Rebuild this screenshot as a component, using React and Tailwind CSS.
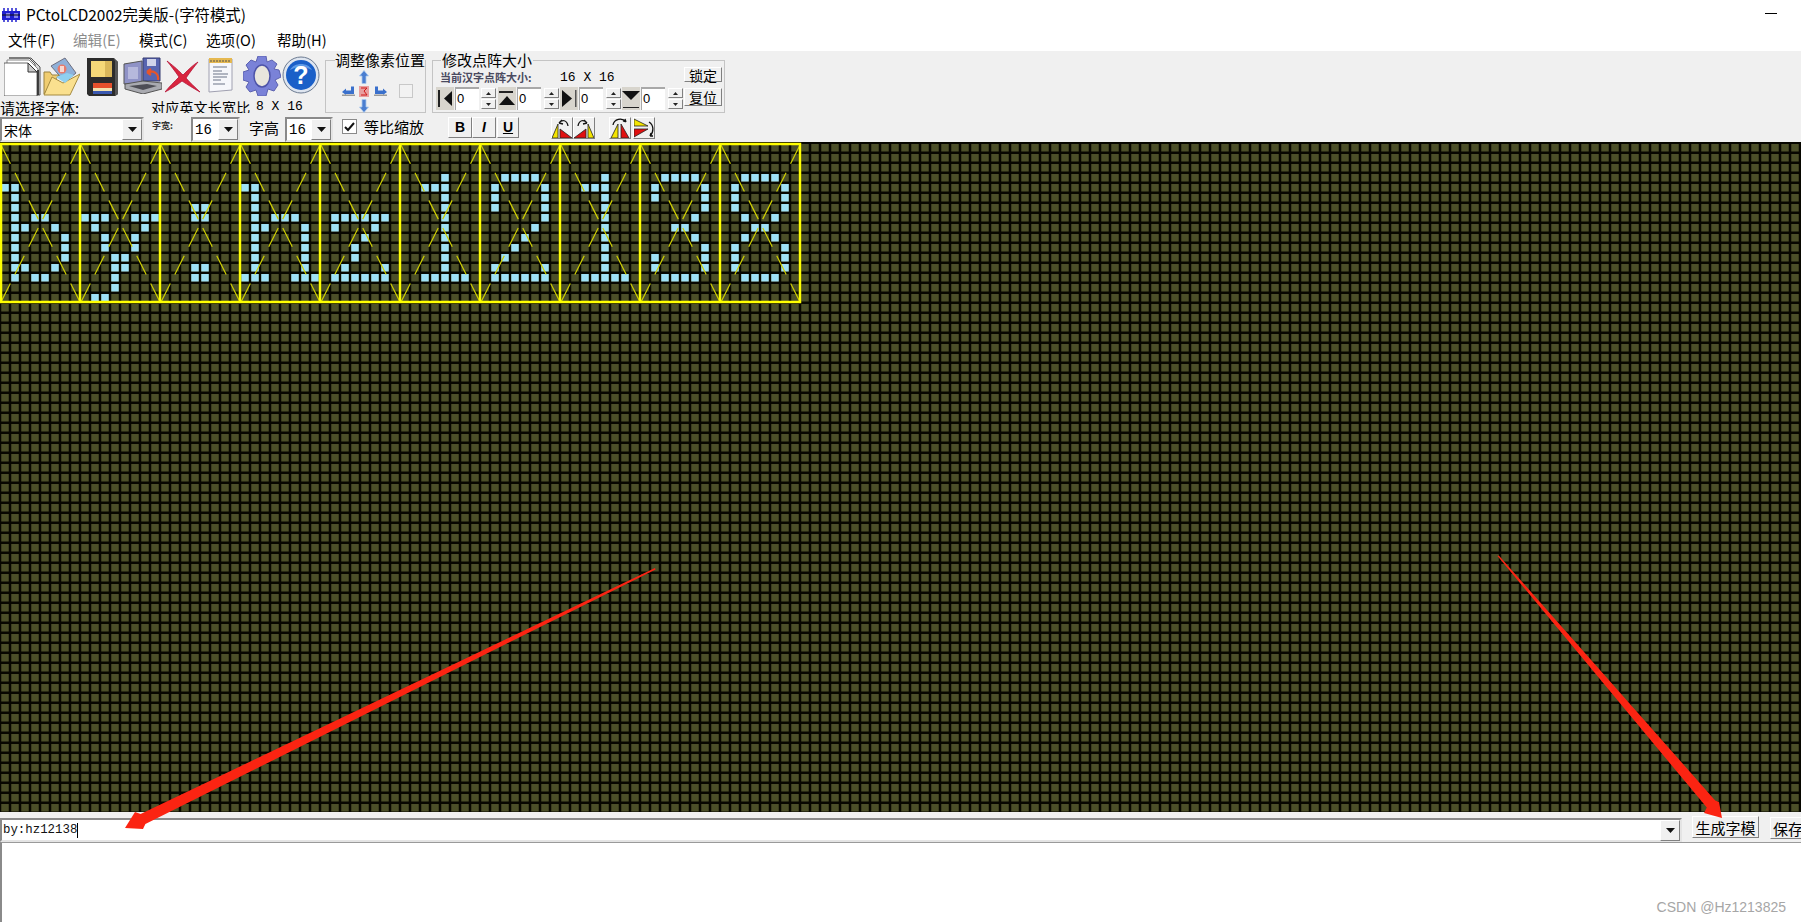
import React from 'react'

const glyphs = {
  b: { 4: '01', 5: '1', 6: '1', 7: '134', 8: '125', 9: '16', 10: '16', 11: '16', 12: '125', 13: '134' },
  y: { 7: '012567', 8: '16', 9: '25', 10: '25', 11: '34', 12: '34', 13: '3', 14: '3', 15: '12' },
  colon: { 6: '34', 7: '34', 12: '34', 13: '34' },
  h: { 4: '01', 5: '1', 6: '1', 7: '1345', 8: '126', 9: '16', 10: '16', 11: '16', 12: '16', 13: '012567' },
  z: { 7: '123456', 8: '15', 9: '4', 10: '3', 11: '3', 12: '26', 13: '123456' },
  one: { 3: '4', 4: '234', 5: '4', 6: '4', 7: '4', 8: '4', 9: '4', 10: '4', 11: '4', 12: '4', 13: '23456' },
  two: { 3: '2345', 4: '16', 5: '16', 6: '16', 7: '6', 8: '5', 9: '4', 10: '3', 11: '2', 12: '16', 13: '123456' },
  three: { 3: '2345', 4: '16', 5: '16', 6: '6', 7: '5', 8: '34', 9: '5', 10: '6', 11: '16', 12: '16', 13: '2345' },
  eight: { 3: '2345', 4: '16', 5: '16', 6: '16', 7: '25', 8: '34', 9: '25', 10: '16', 11: '16', 12: '16', 13: '2345' },
}

const word = ['b', 'y', 'colon', 'h', 'z', 'one', 'two', 'one', 'three', 'eight']

const raised = 'border border-t-white border-l-white border-r-[#808080] border-b-[#808080] bg-[#f0f0f0]'
const sunken = 'border-2 border-t-[#8a8a8a] border-l-[#8a8a8a] border-r-[#e4e4e4] border-b-[#e4e4e4] bg-white'

const MatrixCanvas = () => {
  const cells = []
  word.forEach((name, c) => {
    Object.entries(glyphs[name]).forEach(([row, cols]) => {
      cols.split('').forEach((col) => {
        cells.push(
          <rect key={`${c}-${row}-${col}`} x={c * 80 + Number(col) * 10 + 1.25} y={Number(row) * 10 + 2} width="7.5" height="7.5" fill="#9fe1f6" />
        )
      })
    })
  })

  return (
    <svg width="1801" height="670" className="block shrink-0">
      <defs>
        <pattern id="dot" width="10" height="10" patternUnits="userSpaceOnUse">
          <rect width="10" height="10" fill="#070700" />
          <rect x="1.25" y="2" width="7.5" height="7.5" fill="#4b4f28" />
        </pattern>
      </defs>
      <rect width="1801" height="670" fill="url(#dot)" />
      {cells}
      {word.map((_, c) => (
        <g key={c} stroke="#cfcf00" strokeWidth="1.2" strokeDasharray="21 10">
          <line x1={c * 80 + 1} y1="3" x2={c * 80 + 80} y2="160" />
          <line x1={c * 80 + 80} y1="3" x2={c * 80 + 1} y2="160" />
        </g>
      ))}
      <g stroke="#ffff00" strokeWidth="2.5" fill="none">
        <rect x="1" y="2" width="799" height="158" strokeWidth="2.5" />
        {word.slice(1).map((_, c) => (
          <line key={c} x1={(c + 1) * 80} y1="2" x2={(c + 1) * 80} y2="160" />
        ))}
      </g>
    </svg>
  )
}

const NewIcon = () => (
  <svg width="37" height="40" viewBox="0 0 37 40" className="shrink-0">
    <path d="M5 2H27L36 11V39H31V8L25 2Z" fill="#d8d8d8" stroke="#555" strokeWidth="1" />
    <path d="M3 4H25L34 13V39H3Z" fill="#ffffff" stroke="#8a8a8a" strokeWidth="1" />
    <path d="M0 7H24L33 16V40H0Z" fill="#ffffff" stroke="#444" strokeWidth="0.8" />
    <path d="M24 7V16H33Z" fill="#c9c9c9" stroke="#333" strokeWidth="1" />
    <path d="M34 14V39" stroke="#222" strokeWidth="1.6" />
  </svg>
)

const OpenIcon = () => (
  <svg width="37" height="40" viewBox="0 0 37 40" className="shrink-0">
    <path d="M8 10L22 2L33 17L22 26Z" fill="#8fb0d8" stroke="#6f6f80" strokeWidth="1" />
    <circle cx="19" cy="13" r="4.5" fill="#e87a6a" />
    <path d="M17 10h4v6h-4z" fill="#f7d8d0" />
    <path d="M1 16H7L9 19H16L1 38Z" fill="#f0cd70" stroke="#9a8240" strokeWidth="1" />
    <path d="M1 39L9 21L20 27L37 18L27 39Z" fill="#fae08f" stroke="#a48a40" strokeWidth="1" />
    <path d="M13 21L22 27L31 19L24 17Z" fill="#8fd0f0" />
  </svg>
)

const SaveIcon = () => (
  <svg width="31" height="39" viewBox="0 0 31 39" className="shrink-0">
    <path d="M0 1H27L31 5V37L28 39H2L0 37Z" fill="#2c2c2c" />
    <path d="M26 1L31 5V37L28 39V4Z" fill="#555" />
    <rect x="4" y="4" width="21" height="16" fill="#f5d878" />
    <rect x="18" y="4" width="7" height="16" fill="#d9b75a" />
    <rect x="6" y="26" width="19" height="11" fill="#e4502c" />
    <rect x="6" y="31" width="19" height="3" fill="#f1e2b0" />
    <rect x="6" y="34" width="19" height="3" fill="#3a58b0" />
  </svg>
)

const SaveAsIcon = () => (
  <svg width="39" height="37" viewBox="0 0 39 37" className="shrink-0">
    <path d="M1 7L19 4V26L1 27Z" fill="#8f92c6" stroke="#555" strokeWidth="1" />
    <path d="M5 10H15V22H5Z" fill="#b6b8dc" />
    <path d="M20 1H37V24H20Z" fill="#5865b0" stroke="#353a70" strokeWidth="1" />
    <rect x="24" y="2" width="9" height="7" fill="#d0d4ea" />
    <path d="M2 27L20 24L39 26V32L20 37L2 32Z" fill="#a9aab0" stroke="#555" strokeWidth="1" />
    <path d="M6 29L24 27L34 29L20 33Z" fill="#4d4d55" />
    <path d="M28 15H24M24 15L28 12M24 15L28 18M24 15C30 13 36 16 35 23" stroke="#e8552a" strokeWidth="2.2" fill="none" />
  </svg>
)

const DeleteIcon = () => (
  <svg width="35" height="33" viewBox="0 0 35 33" className="shrink-0">
    <path d="M2 1C10 7 14 11 18 15C24 9 28 5 33 2C29 7 25 12 21 18C25 23 30 27 35 32C28 28 23 25 17 21C12 25 6 29 0 32C4 27 9 22 14 17C10 11 6 6 2 1Z" fill="#d9263f" stroke="#b6173a" strokeWidth="0.8" />
  </svg>
)

const NotesIcon = () => (
  <svg width="25" height="36" viewBox="0 0 25 36" className="shrink-0">
    <path d="M1 2H24V33L1 35Z" fill="#f6f7fb" stroke="#a0a0b0" strokeWidth="1" />
    <rect x="1" y="1" width="23" height="5" fill="#e5b850" />
    <path d="M3 3v2M6 3v2M9 3v2M12 3v2M15 3v2M18 3v2M21 3v2" stroke="#555" strokeWidth="1" />
    <path d="M5 10H19M5 14H14M5 17H20M5 20H19M5 23H13M5 27H17" stroke="#6a7488" strokeWidth="1.2" />
  </svg>
)

const GearIcon = () => (
  <svg width="38" height="40" viewBox="0 0 38 40" className="shrink-0">
    <path
      d="M15 0H23L24 6L29 4L34 8L31 13L36 14L38 21L32 24L35 29L31 35L25 33L23 40H15L13 34L7 36L3 31L6 26L0 24V16L6 14L3 9L8 4L13 6Z"
      fill="#7a82d8"
      stroke="#5c62b0"
      strokeWidth="1"
    />
    <ellipse cx="19" cy="20" rx="8" ry="11" fill="#e9e6dd" stroke="#4e54a8" strokeWidth="1.5" />
  </svg>
)

const HelpIcon = () => (
  <svg width="38" height="38" viewBox="0 0 38 38" className="shrink-0">
    <circle cx="19" cy="19" r="18" fill="#dfe6f0" stroke="#6b7a90" strokeWidth="1" />
    <circle cx="19" cy="19" r="15" fill="#1a5fc8" />
    <path d="M8 14C12 6 26 6 30 14C22 10 15 10 8 14Z" fill="#5e9ae6" />
    <text x="19" y="28" textAnchor="middle" fontSize="25" fontWeight="700" fill="#fff" fontFamily="Liberation Sans">?</text>
  </svg>
)

const UpDownArrow = ({ flip }) => (
  <svg width="10" height="14" viewBox="0 0 10 14" className={flip ? 'rotate-180' : ''}>
    <path d="M5 0.5L9.5 6H7V13.5H3V6H0.5Z" fill="#4a7ed0" stroke="#a8c8ee" strokeWidth="0.8" />
  </svg>
)

const SideArrow = ({ flip }) => (
  <svg width="13" height="10" viewBox="0 0 13 10" className={flip ? '-scale-x-100' : ''}>
    <path d="M0 6L4 2.5V4.5H9V0.5H12V8H4V9Z" fill="#3a70cc" />
    <rect x="0" y="8.5" width="13" height="1.5" fill="#9a9a9a" />
  </svg>
)

const SmallTri = ({ down }) => (
  <svg width="5" height="3" viewBox="0 0 5 3" className={down ? 'rotate-180' : ''}>
    <path d="M2.5 0L5 3H0Z" fill="#222" />
  </svg>
)

const Spin = () => (
  <div className="flex flex-col gap-[1px] w-[15px] shrink-0">
    <div className={`${raised} h-[10px] flex items-center justify-center`}>
      <SmallTri />
    </div>
    <div className={`${raised} h-[10px] flex items-center justify-center`}>
      <SmallTri down />
    </div>
  </div>
)

const EdgeIcon = ({ dir }) => {
  const shapes = {
    left: (
      <>
        <path d="M2 3H4V20H2Z" fill="#222" />
        <path d="M8 11.5L16 4V19Z" fill="#111" />
      </>
    ),
    up: (
      <>
        <path d="M1 18L9 9L17 18Z" fill="#111" />
        <path d="M1 4H15V6H1Z" fill="#222" />
      </>
    ),
    right: (
      <>
        <path d="M15 3H16.5V20H15Z" fill="#555" />
        <path d="M2 3L12 11.5L2 20Z" fill="#111" />
      </>
    ),
    down: (
      <>
        <path d="M0 4L18 4L9 13Z" fill="#111" />
        <path d="M1 20H17V21H1Z" fill="#222" />
      </>
    ),
  }
  return (
    <svg width="18" height="23" viewBox="0 0 18 23" className="shrink-0 bg-[#d8d5cd]">
      {shapes[dir]}
    </svg>
  )
}

const SpinGroup = ({ dir, iconGap, after }) => (
  <div className="flex items-center" style={{ marginRight: after }}>
    <EdgeIcon dir={dir} />
    <div className="ml-[1px] w-[24px] h-[23px] bg-white border-t-2 border-l border-[#a8a8a8] font-['Liberation_Sans',sans-serif] text-[13px] leading-[20px] pl-[1px]">
      0
    </div>
    <div style={{ marginLeft: iconGap }}>
      <Spin />
    </div>
  </div>
)

const DropButton = () => (
  <div className={`${raised} w-[20px] h-[21px] flex items-center justify-center shrink-0`}>
    <svg width="9" height="5" viewBox="0 0 9 5">
      <path d="M0 0H9L4.5 5Z" fill="#111" />
    </svg>
  </div>
)

const Combo = ({ value, className, mono }) => (
  <div className={`${sunken} ${className} h-[25px] flex items-center justify-between shrink-0`}>
    <span className={`pl-[2px] text-[14px] leading-none ${mono ? "font-['Liberation_Mono',monospace] text-[13px]" : ''}`}>{value}</span>
    <DropButton />
  </div>
)

const FlipIcon = ({ kind }) => {
  const bodies = {
    ccw: (
      <>
        <path d="M0 20L6 6V20Z" fill="#f4e400" stroke="#222" strokeWidth="0.8" />
        <path d="M8 11L20 20H8Z" fill="#e01010" stroke="#222" strokeWidth="0.8" />
        <path d="M7 5C10 1 15 2 16 8M7 5L10 2M7 5L11 6" stroke="#111" strokeWidth="1.3" fill="none" />
      </>
    ),
    cw: (
      <>
        <path d="M0 20L12 11V20Z" fill="#e01010" stroke="#222" strokeWidth="0.8" />
        <path d="M14 6L20 20H14Z" fill="#f4e400" stroke="#222" strokeWidth="0.8" />
        <path d="M13 5C10 1 5 2 4 8M13 5L10 2M13 5L9 6" stroke="#111" strokeWidth="1.3" fill="none" />
      </>
    ),
    vert: (
      <>
        <path d="M1 20L8 6V20Z" fill="#f4e400" stroke="#222" strokeWidth="0.8" />
        <path d="M11 6L19 20H11Z" fill="#e01010" stroke="#222" strokeWidth="0.8" />
        <path d="M3 7C4 1 12 -1 16 4M16 4L13 3M16 4L15 1" stroke="#111" strokeWidth="1.3" fill="none" />
      </>
    ),
    horiz: (
      <>
        <path d="M0 1L14 8H0Z" fill="#f4e400" stroke="#222" strokeWidth="0.8" />
        <path d="M0 11H14L0 19Z" fill="#e01010" stroke="#222" strokeWidth="0.8" />
        <path d="M15 4C20 7 20 14 16 18M16 18L19 18M16 18L17 15" stroke="#111" strokeWidth="1.3" fill="none" />
      </>
    ),
  }
  return (
    <div className={`${raised} w-[22px] h-[22px] shrink-0`}>
      <svg width="20" height="20" viewBox="0 0 20 20" className="block">
        {bodies[kind]}
      </svg>
    </div>
  )
}

const ToolButton = ({ children, className }) => (
  <div className={`${raised} ${className} flex items-center justify-center shrink-0`}>{children}</div>
)

const PositionGroup = () => (
  <fieldset className="w-[101px] h-[61px] ml-0 border border-[#c4c4c4] shrink-0 min-w-0">
    <legend className="ml-[9px] text-[15px] leading-[16px] whitespace-nowrap">调整像素位置</legend>
    <div className="flex items-center">
      <div className="ml-[14px] mt-[1px] grid grid-cols-[16px_16px_16px] grid-rows-[15px_14px_15px] place-items-center">
        <span />
        <UpDownArrow />
        <span />
        <SideArrow />
        <svg width="10" height="11" viewBox="0 0 10 11">
          <rect width="10" height="11" fill="#e8a0a0" />
          <path d="M2 2H8L5 5L8 9H2" stroke="#d01818" fill="none" />
        </svg>
        <SideArrow flip />
        <span />
        <UpDownArrow flip />
        <span />
      </div>
      <div className="ml-[11px] w-[14px] h-[14px] border border-[#c8c8c8] bg-[#f2f2f2]" />
    </div>
  </fieldset>
)

const SizeGroup = () => (
  <fieldset className="ml-[6px] w-[293px] h-[61px] border border-[#c4c4c4] shrink-0 min-w-0">
    <legend className="ml-[8px] px-[1px] text-[15px] leading-[16px] whitespace-nowrap">修改点阵大小</legend>
    <div className="flex flex-col">
      <div className="flex items-start h-[20px]">
        <span className="ml-[7px] mt-[2px] w-[120px] text-[11px] leading-[14px] text-[#4a4a60] font-bold whitespace-nowrap">当前汉字点阵大小:</span>
        <span className="mt-[3px] font-['Liberation_Mono',monospace] text-[13px] leading-[14px] whitespace-pre">16 X 16</span>
        <ToolButton className="ml-auto mr-[2px] w-[38px] h-[15px] text-[14px] leading-none -mt-[1px]">锁定</ToolButton>
      </div>
      <div className="flex items-center -mt-[1px] pl-[3px]">
        <SpinGroup dir="left" iconGap="2px" after="2px" />
        <SpinGroup dir="up" iconGap="3px" after="1px" />
        <SpinGroup dir="right" iconGap="3px" after="1px" />
        <SpinGroup dir="down" iconGap="3px" after="0px" />
        <ToolButton className="ml-[1px] w-[38px] h-[18px] text-[14px] leading-none -mt-[3px]">复位</ToolButton>
      </div>
    </div>
  </fieldset>
)

const Toolbar = () => (
  <div className="h-[91px] bg-[#f0f0f0] flex flex-col shrink-0">
    <div className="flex h-[64px] pt-[1px]">
      <div className="w-[325px] shrink-0 flex flex-col">
        <div className="h-[47px] flex items-start pt-[4px]">
          <div className="ml-[4px]"><NewIcon /></div>
          <div className="ml-[2px]"><OpenIcon /></div>
          <div className="ml-[7px] mt-[1px]"><SaveIcon /></div>
          <div className="ml-[5px] mt-[1px]"><SaveAsIcon /></div>
          <div className="ml-[3px] mt-[4px]"><DeleteIcon /></div>
          <div className="ml-[8px] mt-[1px]"><NotesIcon /></div>
          <div className="ml-[10px]"><GearIcon /></div>
          <div className="ml-[1px]"><HelpIcon /></div>
        </div>
        <div className="h-[14px] flex items-start whitespace-nowrap">
          <span className="w-[151px] text-[15px] leading-[17px]">请选择字体:</span>
          <span className="w-[105px] h-[14px] overflow-hidden text-[14px] leading-[16px] tracking-[0.2px]">对应英文长宽比</span>
          <span className="font-['Liberation_Mono',monospace] text-[13px] leading-[16px] whitespace-pre">8 X 16</span>
        </div>
      </div>
      <PositionGroup />
      <SizeGroup />
    </div>
    <div className="flex items-start h-[27px] pt-[2px]">
      <Combo value="宋体" className="w-[144px]" />
      <span className="ml-[8px] w-[39px] mt-[3px] text-[9px] leading-[12px] font-bold text-[#333]">字宽:</span>
      <Combo value="16" mono className="w-[49px]" />
      <span className="ml-[9px] w-[36px] text-[15px] leading-[22px]">字高</span>
      <Combo value="16" mono className="w-[48px]" />
      <div className="ml-[9px] mt-[2px] w-[15px] h-[15px] bg-white border border-[#8a8a8a] flex items-center justify-center shrink-0">
        <svg width="11" height="10" viewBox="0 0 11 10">
          <path d="M1 5L4 8L10 1" stroke="#111" strokeWidth="2" fill="none" />
        </svg>
      </div>
      <span className="ml-[7px] w-[84px] text-[15px] leading-[20px] whitespace-nowrap">等比缩放</span>
      <ToolButton className="w-[24px] h-[21px] font-['Liberation_Sans',sans-serif] font-bold text-[14px]">B</ToolButton>
      <ToolButton className="w-[24px] h-[21px] font-['Liberation_Sans',sans-serif] font-bold italic text-[14px]">I</ToolButton>
      <ToolButton className="ml-[1px] w-[22px] h-[21px] font-['Liberation_Sans',sans-serif] font-bold underline text-[14px]">U</ToolButton>
      <div className="ml-[32px] flex"><FlipIcon kind="ccw" /><FlipIcon kind="cw" /></div>
      <div className="ml-[14px] flex gap-[2px]"><FlipIcon kind="vert" /><FlipIcon kind="horiz" /></div>
    </div>
  </div>
)

const BottomBar = () => (
  <div className="h-[30px] bg-[#f0f0f0] flex items-start shrink-0 overflow-hidden">
    <div className={`${sunken} mt-[6px] w-[1682px] h-[24px] flex items-center justify-between shrink-0`}>
      <span className="pl-[1px] font-['Liberation_Mono',monospace] text-[12.4px] leading-none text-[#111] border-r border-black h-[15px] flex items-center">by:hz12138</span>
      <DropButton />
    </div>
    <ToolButton className="ml-[10px] mt-[4px] w-[67px] h-[22px] text-[15px] leading-none">生成字模</ToolButton>
    <ToolButton className="ml-[11px] mt-[5px] w-[60px] h-[22px] text-[15px] leading-none justify-start pl-[2px]">保存</ToolButton>
  </div>
)

const AnnotationArrows = () => (
  <svg width="1801" height="922" className="absolute inset-0 pointer-events-none">
    <path d="M655 568L655.6 569.4L145.4 824L143 829L125 828L135 812L140.6 814Z" fill="#fb2412" />
    <path d="M1497.5 556L1498.8 555.6L1715.2 800.4L1719 802L1722 818L1704 813L1706.8 807.6Z" fill="#fb2412" />
  </svg>
)

export default function App() {
  return (
    <div className="relative w-full h-[922px] overflow-hidden bg-white flex flex-col text-black font-['Noto_Sans_CJK_SC',sans-serif]">
      <div className="h-[30px] flex items-center shrink-0">
        <svg width="20" height="16" viewBox="0 0 20 16" className="ml-[1px] shrink-0">
          <rect width="20" height="16" fill="#fff" />
          <path d="M1 4H19V13H1Z" fill="#2020d0" />
          <path d="M3 1V15M7 1V15M11 1V15M15 1V15" stroke="#2020d0" strokeWidth="1.5" />
          <path d="M5 6H9V11H5ZM13 6H17V11H13Z" fill="#8888ee" />
          <path d="M1 8H19" stroke="#111" strokeWidth="1" />
        </svg>
        <span className="ml-[5px] text-[15.4px] leading-none whitespace-nowrap">PCtoLCD2002完美版-(字符模式)</span>
        <div className="ml-auto mr-[24px] self-start mt-[13px] w-[12px] h-[1px] bg-black" />
      </div>
      <div className="h-[21px] flex items-center pl-[8px] text-[14.6px] leading-none whitespace-nowrap shrink-0">
        <span className="w-[65px]">文件(F)</span>
        <span className="w-[66px] text-[#8c8c8c]">编辑(E)</span>
        <span className="w-[67px]">模式(C)</span>
        <span className="w-[71px]">选项(O)</span>
        <span>帮助(H)</span>
      </div>
      <Toolbar />
      <MatrixCanvas />
      <BottomBar />
      <div className="flex-1 relative bg-white border-l-2 border-t border-l-[#8a8a8a] border-t-[#9a9a9a]">
        <span className="absolute right-[15px] bottom-[8px] font-['Liberation_Sans',sans-serif] text-[14px] leading-none text-[#a6a6a6]">CSDN @Hz1213825</span>
      </div>
      <AnnotationArrows />
    </div>
  )
}
